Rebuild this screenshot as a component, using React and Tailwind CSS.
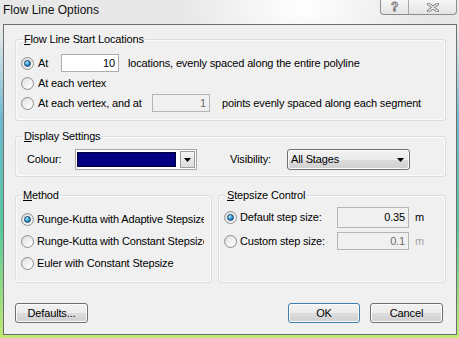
import React from "react";

const BTN =
  "flex h-[20px] items-center justify-center rounded-[3px] border bg-[linear-gradient(to_bottom,#f2f2f2_0%,#ebebeb_50%,#dddddd_51%,#cfcfcf_100%)] text-black shadow-[inset_0_0_0_1px_#fcfcfc]";

function Radio({ checked }) {
  return (
    <span className="flex h-[13px] w-[13px] shrink-0 items-center justify-center rounded-full border border-[#8e8f8f] bg-[linear-gradient(135deg,#dadada,#fbfbfb)]">
      {checked ? (
        <span className="h-[7px] w-[7px] rounded-full border border-[#16476b] bg-[radial-gradient(circle_at_35%_30%,#b9ecff_0%,#3aa0dc_45%,#0d4f85_100%)]" />
      ) : (
        <span className="h-[9px] w-[9px] rounded-full bg-[linear-gradient(135deg,#e2e2e2,#ffffff)]" />
      )}
    </span>
  );
}

// plain text box; "readonly" keeps black text on the grey face
function Field({ value, look, className }) {
  const skin =
    look === "disabled"
      ? "border-[#b5b5b5] bg-[#f0f0f0] text-[#6d6d6d]"
      : look === "readonly"
      ? "border-[#b5b5b5] bg-[#f0f0f0] text-black"
      : "border-[#abadb3] bg-white text-black";
  return (
    <div className={`flex items-center justify-end border pr-[3px] ${skin} ${className}`}>
      {value}
    </div>
  );
}

function Arrow() {
  return (
    <svg width="7" height="4" viewBox="0 0 7 4">
      <polygon points="0,0 7,0 3.5,4" fill="#000" />
    </svg>
  );
}

function Group({ legend, hotkey, legendGap, className, children }) {
  return (
    <fieldset className={`rounded-[3px] border border-[#d5dfe5] shadow-[inset_0_0_0_1px_#fbfbfb] ${className}`}>
      <legend className={`px-[1px] leading-[13px] ${legendGap}`}>
        <span className="underline underline-offset-[1px]">{hotkey}</span>
        {legend}
      </legend>
      {children}
    </fieldset>
  );
}

export default function App() {
  return (
    <div className="flex h-[338px] w-[459px] flex-col overflow-hidden bg-[linear-gradient(to_bottom,#e9e9e9_0px,#e9e9e9_30px,#6cb8cf_120px,#57c99c_230px,#c2e872_338px)] font-['Liberation_Sans',Arial,sans-serif] text-[11px] leading-[13px] tracking-[-0.15px] text-black">
      {/* title bar */}
      <div className="flex h-[24px] shrink-0 items-start justify-between bg-[radial-gradient(ellipse_120px_60px_at_66%_30%,#ffffff_0%,#f6f6f6_40%,#e8e8e8_100%)]">
        <span className="mt-[3px] ml-[3px] text-[12px] leading-[15px] tracking-normal text-[#111]">Flow Line Options</span>
        <div className="mr-[2px] flex h-[15px] rounded-b-[4px] border border-t-0 border-[#8d8d8d] bg-[linear-gradient(to_bottom,#f6f6f6,#e4e4e4)]">
          <div className="flex w-[28px] items-center justify-center border-r border-[#a8a8a8] text-[12px] font-bold leading-[12px] text-transparent [-webkit-text-stroke:0.8px_#6b6b6b]">
            ?
          </div>
          <div className="flex w-[47px] items-center justify-center">
            <svg width="12" height="9" viewBox="0 0 12 9">
              <path d="M1.5 1 L10.5 8 M10.5 1 L1.5 8" stroke="#7a7a7a" strokeWidth="3" strokeLinecap="round" />
              <path d="M1.5 1 L10.5 8 M10.5 1 L1.5 8" stroke="#f4f4f4" strokeWidth="1.2" strokeLinecap="round" />
            </svg>
          </div>
        </div>
      </div>

      {/* client area */}
      <div className="mb-[3px] ml-[3px] mr-[2px] flex flex-1 flex-col border border-[#6e6e6e] bg-[#f0f0f0]">
        <Group
          legend="low Line Start Locations"
          hotkey="F"
          legendGap="ml-[7px]"
          className="mt-[8px] ml-[11px] mr-[10px]"
        >
          <div className="flex flex-col pt-[7px] pb-[7px] pl-[5px]">
            <div className="flex h-[20px] items-center">
              <Radio checked />
              <span className="ml-[4px] w-[23px]">At</span>
              <Field value="10" className="h-[18px] w-[58px]" />
              <span className="ml-[9px]">locations, evenly spaced along the entire polyline</span>
            </div>
            <div className="flex h-[20px] items-center">
              <Radio />
              <span className="ml-[4px]">At each vertex</span>
            </div>
            <div className="flex h-[20px] items-center">
              <Radio />
              <span className="ml-[4px] w-[114px]">At each vertex, and at</span>
              <Field value="1" look="disabled" className="h-[18px] w-[58px]" />
              <span className="ml-[12px]">points evenly spaced along each segment</span>
            </div>
          </div>
        </Group>

        <Group
          legend="isplay Settings"
          hotkey="D"
          legendGap="ml-[7px]"
          className="mt-[9px] ml-[11px] mr-[10px]"
        >
          <div className="flex h-[21px] items-center pl-[11px] mt-[6px] mb-[6px]">
            <span className="w-[48px]">Colour:</span>
            <div className="flex h-[21px] w-[122px] items-center border border-[#a7a7a7] bg-white pl-[1px] pr-[1px]">
              <div className="h-[15px] w-[100px] border border-[#00003a] bg-[#000080]" />
              <div className="ml-[4px] flex h-[17px] w-[15px] items-center justify-center border border-[#9d9d9d] bg-[linear-gradient(to_bottom,#f4f4f4,#dcdcdc)]">
                <Arrow />
              </div>
            </div>
            <span className="ml-[33px] w-[57px]">Visibility:</span>
            <div className="flex h-[21px] w-[123px] items-center justify-between rounded-[3px] border border-[#707070] bg-[linear-gradient(to_bottom,#f2f2f2_0%,#ebebeb_50%,#dddddd_51%,#cfcfcf_100%)] pl-[3px] pr-[5px] shadow-[inset_0_0_0_1px_#fafafa]">
              <span>All Stages</span>
              <Arrow />
            </div>
          </div>
        </Group>

        <div className="mt-[12px] ml-[11px] mr-[10px] flex gap-[6px]">
          <Group legend="ethod" hotkey="M" legendGap="ml-[6px]" className="w-[197px] shrink-0">
            <div className="flex flex-col pt-[6px] pb-[8px] pl-[5px]">
              {[
                ["Runge-Kutta with Adaptive Stepsize", true],
                ["Runge-Kutta with Constant Stepsize", false],
                ["Euler with Constant Stepsize", false],
              ].map(([label, on]) => (
                <div key={label} className="flex h-[22px] items-center">
                  <Radio checked={on} />
                  <span className="ml-[3px] w-[167px] overflow-hidden whitespace-nowrap">{label}</span>
                </div>
              ))}
            </div>
          </Group>
          <Group legend="tepsize Control" hotkey="S" legendGap="ml-[7px]" className="flex-1">
            <div className="flex flex-col pt-[5px] pl-[5px]">
              <div className="flex h-[21px] items-center">
                <Radio checked />
                <span className="ml-[3px] w-[97px]">Default step size:</span>
                <Field value="0.35" look="readonly" className="h-[21px] w-[72px]" />
                <span className="ml-[6px]">m</span>
              </div>
              <div className="mt-[4px] flex h-[18px] items-center">
                <Radio />
                <span className="ml-[3px] w-[97px]">Custom step size:</span>
                <Field value="0.1" look="disabled" className="h-[18px] w-[72px]" />
                <span className="ml-[6px] text-[#a3a3a3]">m</span>
              </div>
            </div>
          </Group>
        </div>

        <div className="mt-[20px] ml-[11px] mr-[13px] flex">
          <div className={`${BTN} w-[73px] border-[#707070]`}>Defaults...</div>
          <div className={`${BTN} ml-auto w-[72px] border-[#3c7fb1] shadow-[inset_0_0_0_1px_#a9dcf4]`}>OK</div>
          <div className={`${BTN} ml-[10px] w-[73px] border-[#707070]`}>Cancel</div>
        </div>
      </div>
    </div>
  );
}
